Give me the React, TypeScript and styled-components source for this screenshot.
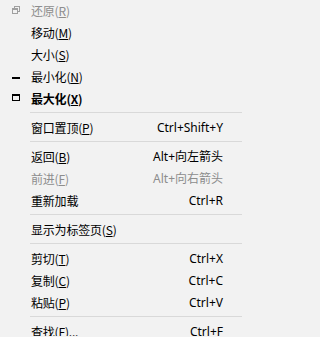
import React from "react";
import styled, { createGlobalStyle } from "styled-components";

const Global = createGlobalStyle`
  html, body { margin: 0; padding: 0; background: #f2f2f2; }
  body { font-family: "Noto Sans", "Noto Sans CJK SC", sans-serif; }
`;

const Menu = styled.div`
  width: 242px;
  height: 337px;
  overflow: hidden;
  background: #f2f2f2;
  display: flex;
  flex-direction: column;
  margin-top: -1px;
`;

const Row = styled.div<{ $disabled?: boolean; $bold?: boolean }>`
  height: 22px;
  flex: none;
  display: grid;
  grid-template-columns: 31px 1fr auto;
  align-items: center;
  padding-right: 19px;
  font-size: 12px;
  color: ${(p) => (p.$disabled ? "#8d8d8d" : "#000")};
  font-weight: ${(p) => (p.$bold ? 700 : 400)};
  white-space: nowrap;
`;

const IconCell = styled.div`
  display: flex;
  align-items: center;
  justify-content: center;
  padding-left: 1px;
  height: 22px;
`;

const Label = styled.span`
  font-family: "Noto Sans CJK SC", sans-serif;
  letter-spacing: -0.2px;
`;

const Key = styled.span`
  text-decoration: underline;
  text-underline-offset: 1px;
`;

const Shortcut = styled.span`
  font-family: "Noto Sans", "Noto Sans CJK SC", sans-serif;
  text-align: right;
`;

const Separator = styled.div`
  flex: none;
  height: 7px;
  display: flex;
  align-items: center;
  padding-left: 30px;
  &::after {
    content: "";
    flex: 1;
    height: 1px;
    background: #d9d9d9;
  }
`;

type Item = {
  label: string;
  key?: string;
  suffix?: string;
  shortcut?: string;
  disabled?: boolean;
  bold?: boolean;
  icon?: React.ReactNode;
};

const RestoreIcon = () => (
  <svg width="10" height="10" viewBox="0 0 10 10">
    <rect x="3.5" y="1.5" width="5" height="5" fill="none" stroke="#a0a0a0" />
    <rect x="1" y="3" width="6" height="6" fill="#f2f2f2" />
    <rect x="1.5" y="3.5" width="5" height="5" fill="none" stroke="#a0a0a0" />
    <rect x="1" y="3" width="6" height="2" fill="#a0a0a0" />
  </svg>
);

const MinIcon = () => (
  <svg width="10" height="10" viewBox="0 0 10 10">
    <rect x="1" y="6" width="8" height="2" fill="#000" />
  </svg>
);

const MaxIcon = () => (
  <svg width="10" height="10" viewBox="0 0 10 10">
    <rect x="1.5" y="1.5" width="7" height="6" fill="none" stroke="#000" />
    <rect x="1" y="1" width="8" height="2" fill="#000" />
  </svg>
);

const groups: Item[][] = [
  [
    { label: "还原", key: "R", disabled: true, icon: <RestoreIcon /> },
    { label: "移动", key: "M" },
    { label: "大小", key: "S" },
    { label: "最小化", key: "N", icon: <MinIcon /> },
    { label: "最大化", key: "X", bold: true, icon: <MaxIcon /> },
  ],
  [{ label: "窗口置顶", key: "P", shortcut: "Ctrl+Shift+Y" }],
  [
    { label: "返回", key: "B", shortcut: "Alt+向左箭头" },
    { label: "前进", key: "F", shortcut: "Alt+向右箭头", disabled: true },
    { label: "重新加载", shortcut: "Ctrl+R" },
  ],
  [{ label: "显示为标签页", key: "S" }],
  [
    { label: "剪切", key: "T", shortcut: "Ctrl+X" },
    { label: "复制", key: "C", shortcut: "Ctrl+C" },
    { label: "粘贴", key: "P", shortcut: "Ctrl+V" },
  ],
  [{ label: "查找", key: "F", suffix: "...", shortcut: "Ctrl+F" }],
];

export default function App() {
  return (
    <>
      <Global />
      <Menu>
        {groups.map((g, gi) => (
          <React.Fragment key={gi}>
            {gi > 0 && <Separator />}
            {g.map((it, i) => (
              <Row key={i} $disabled={it.disabled} $bold={it.bold}>
                <IconCell>{it.icon}</IconCell>
                <Label>
                  {it.label}
                  {it.key && (
                    <>
                      (<Key>{it.key}</Key>)
                    </>
                  )}
                  {it.suffix}
                </Label>
                <Shortcut>{it.shortcut}</Shortcut>
              </Row>
            ))}
          </React.Fragment>
        ))}
      </Menu>
    </>
  );
}
